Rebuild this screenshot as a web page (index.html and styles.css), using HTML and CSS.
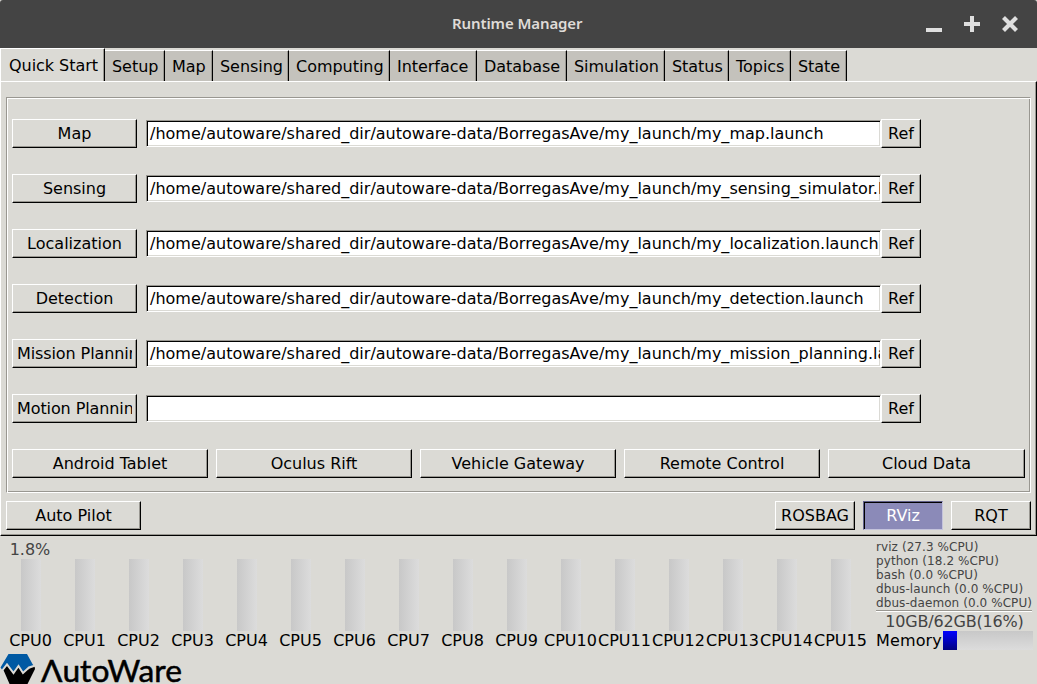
FILE: index.html
```html
<!DOCTYPE html>
<html lang="en">
<head>
<meta charset="utf-8">
<title>Runtime Manager</title>
<link rel="stylesheet" href="styles.css">
</head>
<body>
<header class="titlebar">
  <h1 class="title">Runtime Manager</h1>
  <div class="controls">
    <svg width="16" height="16" viewBox="0 0 16 16"><path d="M0 12h16v4H0z"/></svg>
    <svg width="16" height="16" viewBox="0 0 16 16"><path d="M6 0h4v6h6v4h-6v6H6v-6H0V6h6z"/></svg>
    <svg width="16" height="16" viewBox="0 0 16 16"><path class="cross" d="M1.500 1.500L14.500 14.500M14.500 1.500L1.500 14.500"/></svg>
  </div>
</header>
<nav class="tabs">
  <div class="tab active w105">Quick Start</div>
  <div class="tab w60">Setup</div>
  <div class="tab w48">Map</div>
  <div class="tab w76">Sensing</div>
  <div class="tab w101">Computing</div>
  <div class="tab w87">Interface</div>
  <div class="tab w90">Database</div>
  <div class="tab w98">Simulation</div>
  <div class="tab w64">Status</div>
  <div class="tab w62">Topics</div>
  <div class="tab w56">State</div>
</nav>
<main class="page">
  <section class="group">
    <div class="row"><div class="btn launch">Map</div><div class="field">/home/autoware/shared_dir/autoware-data/BorregasAve/my_launch/my_map.launch</div><div class="btn ref">Ref</div></div>
    <div class="row"><div class="btn launch">Sensing</div><div class="field">/home/autoware/shared_dir/autoware-data/BorregasAve/my_launch/my_sensing_simulator.launch</div><div class="btn ref">Ref</div></div>
    <div class="row"><div class="btn launch">Localization</div><div class="field">/home/autoware/shared_dir/autoware-data/BorregasAve/my_launch/my_localization.launch</div><div class="btn ref">Ref</div></div>
    <div class="row"><div class="btn launch">Detection</div><div class="field">/home/autoware/shared_dir/autoware-data/BorregasAve/my_launch/my_detection.launch</div><div class="btn ref">Ref</div></div>
    <div class="row"><div class="btn launch long"><div class="clip">Mission Planning</div></div><div class="field">/home/autoware/shared_dir/autoware-data/BorregasAve/my_launch/my_mission_planning.launch</div><div class="btn ref">Ref</div></div>
    <div class="row"><div class="btn launch long"><div class="clip">Motion Planning</div></div><div class="field"></div><div class="btn ref">Ref</div></div>
    <div class="devices">
      <div class="btn">Android Tablet</div>
      <div class="btn">Oculus Rift</div>
      <div class="btn">Vehicle Gateway</div>
      <div class="btn">Remote Control</div>
      <div class="btn">Cloud Data</div>
    </div>
  </section>
  <div class="actions">
    <div class="btn pilot">Auto Pilot</div>
    <div class="btn tool">ROSBAG</div>
    <div class="btn tool pressed">RViz</div>
    <div class="btn tool">RQT</div>
  </div>
</main>
<footer class="status">
  <div class="cpus">
    <div class="cpu"><span class="load">1.8%</span><i class="bar"></i><span class="name">CPU0</span></div>
    <div class="cpu"><span class="load"></span><i class="bar"></i><span class="name">CPU1</span></div>
    <div class="cpu"><span class="load"></span><i class="bar"></i><span class="name">CPU2</span></div>
    <div class="cpu"><span class="load"></span><i class="bar"></i><span class="name">CPU3</span></div>
    <div class="cpu"><span class="load"></span><i class="bar"></i><span class="name">CPU4</span></div>
    <div class="cpu"><span class="load"></span><i class="bar"></i><span class="name">CPU5</span></div>
    <div class="cpu"><span class="load"></span><i class="bar"></i><span class="name">CPU6</span></div>
    <div class="cpu"><span class="load"></span><i class="bar"></i><span class="name">CPU7</span></div>
    <div class="cpu"><span class="load"></span><i class="bar"></i><span class="name">CPU8</span></div>
    <div class="cpu"><span class="load"></span><i class="bar"></i><span class="name">CPU9</span></div>
    <div class="cpu"><span class="load"></span><i class="bar"></i><span class="name">CPU10</span></div>
    <div class="cpu"><span class="load"></span><i class="bar"></i><span class="name">CPU11</span></div>
    <div class="cpu"><span class="load"></span><i class="bar"></i><span class="name">CPU12</span></div>
    <div class="cpu"><span class="load"></span><i class="bar"></i><span class="name">CPU13</span></div>
    <div class="cpu"><span class="load"></span><i class="bar"></i><span class="name">CPU14</span></div>
    <div class="cpu"><span class="load"></span><i class="bar"></i><span class="name">CPU15</span></div>
  </div>
  <div class="side">
    <div class="procs">
      <div>rviz (27.3 %CPU)</div>
      <div>python (18.2 %CPU)</div>
      <div>bash (0.0 %CPU)</div>
      <div>dbus-launch (0.0 %CPU)</div>
      <div>dbus-daemon (0.0 %CPU)</div>
    </div>
    <div class="usage">10GB/62GB(16%)</div>
    <div class="memory"><span class="memlabel">Memory</span><div class="membar"><i class="used" style="width:14px"></i></div></div>
  </div>
</footer>
<svg class="logo" width="190" height="33" viewBox="0 651 190 33">
  <path class="blue" d="M8.500 654H27L32.500 664 34 666 22.500 672.500 18 666 13.500 672.500 7 665 3 671 0.500 667.500z"/>
  <path d="M3 669L7 665 13.500 672.500 18 666 22.500 672.500 34.500 666 35 669 27 685H10z"/>
  <path class="wave" d="M1.500 671.500L7 664.500 13.500 673 18.500 666 23 673 29 667.500 35.500 665.500"/>
  <text class="brand" x="41" y="681.500" textLength="141" lengthAdjust="spacingAndGlyphs">ΛutoWare</text>
</svg>
</body>
</html>
```
FILE: styles.css
```css
* { box-sizing: border-box; }
body {
  margin: 0;
  width: 1037px;
  height: 684px;
  overflow: hidden;
  background: #dbdad5;
  color: #000;
  font: 16px/19px "DejaVu Sans", sans-serif;
  white-space: nowrap;
}
.titlebar {
  display: flex;
  align-items: center;
  height: 48px;
  padding: 0 19px 0 452px;
  background: #444;
  border-radius: 3px 3px 0 0;
  justify-content: space-between;
}
.title {
  margin: 0;
  padding-bottom: 3px;
  color: #dfdbd7;
  font: 600 15px/20px "Noto Sans", sans-serif;
  letter-spacing: -0.1px;
}
.controls { display: flex; gap: 22px; fill: #dfdfdf; }
.cross { stroke: #dfdfdf; stroke-width: 4.2; }
.tabs {
  display: flex;
  align-items: flex-end;
  height: 33px;
}
.tab {
  height: 31px;
  padding: 6px 0 0 7px;
  background: #c4c2bc;
  border-top: 1px solid #fff;
  border-right: 1px solid #000;
  box-shadow: inset -1px 0 #999791;
  letter-spacing: -0.04px;
}
.active {
  height: 33px;
  padding: 7px 0 0 8px;
  background: #dbdad5;
  border-left: 1px solid #fff;
}
.w105 { width: 105px; }
.w60 { width: 60px; }
.w48 { width: 48px; }
.w76 { width: 76px; }
.w101 { width: 101px; }
.w87 { width: 87px; }
.w90 { width: 90px; }
.w98 { width: 98px; }
.w64 { width: 64px; }
.w62 { width: 62px; }
.w56 { width: 56px; }
.page {
  height: 455px;
  padding: 15px 5px 0 5px;
  border: 1px solid;
  border-color: #fff #000 #000 #fff;
  box-shadow: inset -1px -1px #999791;
}
.group {
  width: 1025px;
  height: 396px;
  padding: 21px 5px 0;
  border: 1px solid #999791;
  border-color: #999791 #fff #fff #999791;
  box-shadow: inset 1px 1px #fff, inset -1px -1px #999791;
}
.row {
  display: flex;
  align-items: center;
  height: 29px;
  margin-bottom: 26px;
}
.btn {
  height: 29px;
  padding-top: 4px;
  text-align: center;
  border: 1px solid;
  border-color: #fff #000 #000 #fff;
  box-shadow: inset -1px -1px #999791;
}
.launch { width: 125px; margin-right: 9px; }
.long { padding-left: 4px; text-align: left; }
.clip { width: 115px; overflow: hidden; letter-spacing: -0.1px; }
.field {
  width: 735px;
  height: 27px;
  padding: 3px 0 0 3px;
  overflow: hidden;
  background: #fff;
  border: 1px solid;
  border-color: #999791 #fff #fff #999791;
  box-shadow: inset 1px 1px #000, inset -1px -1px #dbdad5;
  letter-spacing: 0.008px;
}
.ref { width: 40px; }
.devices {
  display: grid;
  grid-template-columns: repeat(4, 196px) 197px;
  column-gap: 8px;
}
.actions {
  display: flex;
  gap: 8px;
  padding-top: 8px;
}
.pilot { width: 135px; margin-right: auto; }
.tool { width: 80px; }
.pressed {
  background: #8b8ab8;
  color: #fff;
  border-color: #62618a #c4c3dc #c4c3dc #62618a;
  box-shadow: inset 1px 1px #000;
}
.status {
  display: flex;
  height: 115px;
}
.cpus { display: flex; padding: 4px 0 0 4px; width: 876px; }
.cpu {
  display: flex;
  flex-direction: column;
  align-items: center;
  width: 54px;
  flex: none;
}
.load { height: 19px; color: #444; padding-right: 2px; }
.name { padding-right: 1px; }
.bar {
  width: 20px;
  height: 72px;
  background: linear-gradient(90deg, #c8c8c8, #dcdcdc);
}
.side { width: 157px; padding-top: 4px; }
.procs {
  height: 72px;
  width: 156px;
  color: #444;
  font-size: 12px;
  line-height: 14px;
  letter-spacing: 0.08px;
  border-bottom: 1px solid #fff;
  box-shadow: inset 0 -1px #999791;
}
.usage { height: 19px; text-align: center; color: #444; letter-spacing: -0.18px; }
.memory { display: flex; height: 19px; }
.memlabel { width: 67px; letter-spacing: 0.15px; }
.membar { width: 90px; background: linear-gradient(#c8c8c8, #dcdcdc); }
.used { display: block; height: 19px; background: linear-gradient(#00f, #000080); }
.logo { display: block; }
.blue { fill: #0059a3; }
.wave { fill: none; stroke: #dbdad5; stroke-width: 2; }
.brand { font: 30px "Lato", sans-serif; stroke: #000; stroke-width: 0.5; }
```
